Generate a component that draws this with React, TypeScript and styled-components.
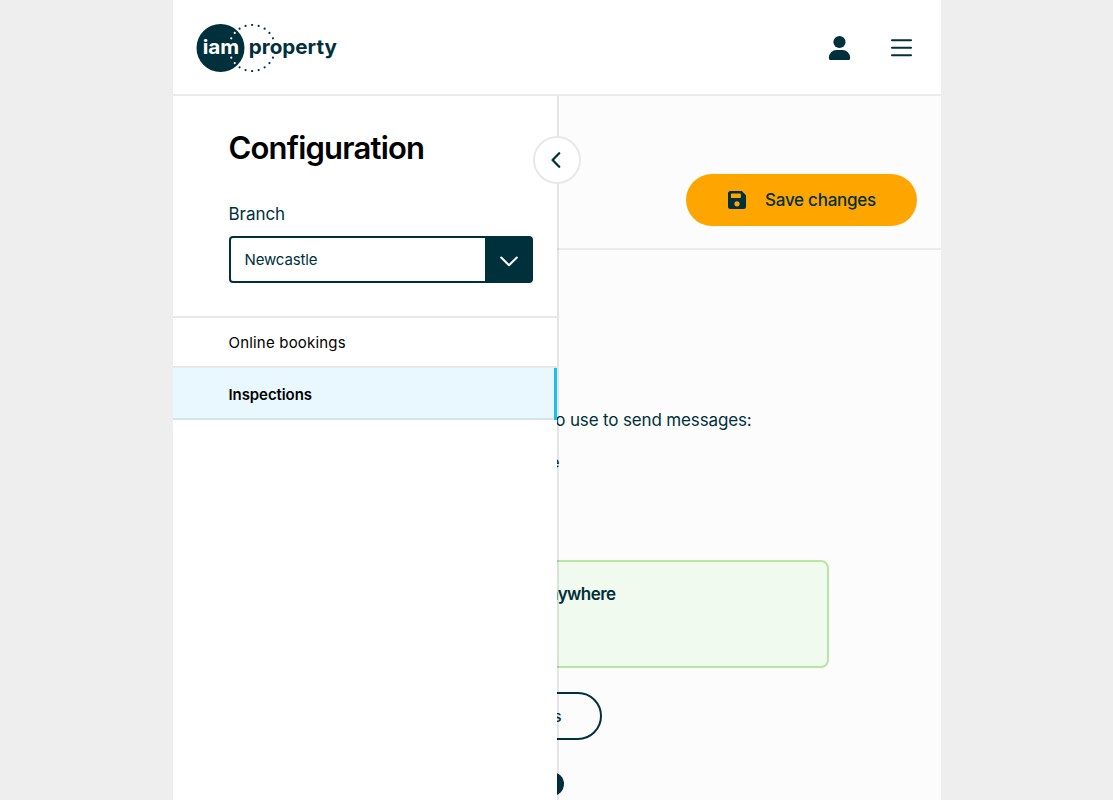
import React from "react";
import styled, { createGlobalStyle } from "styled-components";

const navy = "#00303c";
const line = "#ebebeb";

const GlobalStyle = createGlobalStyle`
  * { box-sizing: border-box; }
  html, body { margin: 0; height: 100%; background: #eeeeee; overflow: hidden; }
  body { font-family: Inter, "Liberation Sans", sans-serif; color: ${navy}; }
  button { font-family: inherit; color: inherit; padding: 0; }
`;

const Page = styled.div`
  width: 768px;
  height: 800px;
  margin: 0 auto;
  background: #fcfcfc;
  display: flex;
  flex-direction: column;
  overflow: hidden;
`;

const Header = styled.header`
  height: 96px;
  flex: none;
  background: #fff;
  border-bottom: 2px solid ${line};
  padding: 2px 28.5px 0 23.5px;
  display: flex;
  align-items: center;
  justify-content: space-between;
`;

const HeaderActions = styled.nav`
  display: flex;
  align-items: center;
  gap: 40px;
`;

const IconButton = styled.button`
  border: 0;
  background: none;
  display: flex;
  svg { overflow: visible; }
`;

const Body = styled.div`
  position: relative;
  flex: 1;
  min-height: 0;
`;

const Sidebar = styled.aside`
  position: absolute;
  top: 0;
  bottom: 0;
  left: 0;
  width: 386px;
  background: #fff;
  background-clip: padding-box;
  border-right: 2px solid rgba(0, 0, 0, 0.09);
`;

const Collapse = styled.button`
  position: absolute;
  top: 40px;
  right: -24px;
  width: 48px;
  height: 48px;
  border: 2px solid #e8e8e8;
  border-radius: 50%;
  background: #fff;
  display: flex;
  align-items: center;
  justify-content: center;
  padding-right: 2px;
`;

const SidebarTop = styled.div`
  height: 222px;
  padding: 32px 24px 0 56px;
  border-bottom: 2px solid #e8e8e8;
`;

const Title = styled.h1`
  margin: 0;
  color: #000;
  font-size: 31px;
  font-weight: 600;
  line-height: 40px;
  letter-spacing: -0.8px;
`;

const Label = styled.label`
  display: block;
  margin-top: 34px;
  font-size: 17px;
  line-height: 24px;
  letter-spacing: -0.05px;
`;

const Select = styled.div`
  margin-top: 10px;
  height: 47px;
  border: 2px solid ${navy};
  border-radius: 4px;
  background: linear-gradient(to left, ${navy} 46px, #fff 46px);
  display: flex;
`;

const SelectValue = styled.span`
  flex: 1;
  padding-left: 14px;
  font-size: 15px;
  line-height: 43px;
  letter-spacing: -0.15px;
`;

const SelectArrow = styled.span`
  width: 46px;
  padding: 3px 0 0 3px;
  display: flex;
  align-items: center;
  justify-content: center;
`;

const NavItem = styled.a<{ $active?: boolean }>`
  display: block;
  height: ${(p) => (p.$active ? 52 : 50)}px;
  padding-left: 56px;
  color: #000;
  font-size: 15px;
  line-height: ${(p) => (p.$active ? 53 : 49)}px;
  font-weight: ${(p) => (p.$active ? 600 : 400)};
  letter-spacing: ${(p) => (p.$active ? -0.08 : 0.19)}px;
  background: ${(p) => (p.$active ? "#e8f8fe" : "#fff")};
  box-shadow: inset 0 -2px ${(p) => (p.$active ? "#d5e4e9" : "#e8e8e8")};
`;

const ActiveItem = styled.div`
  display: flex;
  ${NavItem} { flex: 1; }
`;

const ActiveBar = styled.span`
  width: 3px;
  background: #1bc0e6;
`;

const Toolbar = styled.div`
  height: 154px;
  padding: 78px 24px 0 0;
  border-bottom: 2px solid ${line};
  display: flex;
  justify-content: flex-end;
`;

const SaveButton = styled.button`
  width: 231px;
  height: 52px;
  border: 0;
  border-radius: 26px;
  background: #ffa500;
  display: flex;
  align-items: center;
  justify-content: center;
  gap: 19px;
  padding-left: 2px;
  font-size: 17px;
  font-weight: 500;
  letter-spacing: -0.25px;
`;

const Content = styled.main`
  padding: 158px 112px 0 24px;
`;

const Paragraph = styled.p<{ $width: number; $size?: number }>`
  margin: 0 0 18px;
  width: ${(p) => p.$width}px;
  text-align: right;
  font-size: ${(p) => p.$size ?? 17}px;
  line-height: 24px;
  letter-spacing: -0.15px;
  white-space: nowrap;
`;

const Notice = styled.section`
  margin-top: 86px;
  height: 108px;
  border: 2px solid #b5e6a2;
  border-radius: 8px;
  background: #f0faee;
  padding: 20px 0 0;
`;

const NoticeTitle = styled.h2`
  margin: 0;
  width: 417px;
  text-align: right;
  font-size: 17px;
  font-weight: 600;
  line-height: 24px;
  letter-spacing: -0.55px;
`;

const OutlineButton = styled.button`
  display: block;
  width: 405px;
  height: 48px;
  margin-top: 24px;
  padding-right: 38px;
  border: 2px solid ${navy};
  border-radius: 24px;
  background: transparent;
  font-size: 15px;
  font-weight: 500;
  text-align: right;
`;

const ToggleRow = styled.div`
  width: 367.5px;
  margin-top: 32px;
  display: flex;
  justify-content: flex-end;
`;

const ToggleKnob = styled.span`
  width: 24px;
  height: 24px;
  border-radius: 50%;
  background: ${navy};
`;

const dotAngles = [-115, -131, -147, -163.5, 180, 163.5, 147, 131, 115, 65, 49, 33, 16.5, 0, -16.5, -33, -49, -65];

function Logo() {
  return (
    <svg width="142" height="48" viewBox="-0.5 0 142 48" role="img" aria-label="iam property">
      <circle cx="24" cy="24" r="24" fill={navy} />
      {dotAngles.map((a) => {
        const r = (a * Math.PI) / 180;
        const x = 55.6 + 23 * Math.sin(r);
        const y = 24 + 23 * Math.cos(r);
        const inside = Math.hypot(x - 24, y - 24) < 24;
        return <circle key={a} cx={x} cy={y} r="1.1" fill={inside ? "#fff" : navy} />;
      })}
      <g fontFamily="Inter, sans-serif" fontWeight="700" fontSize="20">
        <text x="6.2" y="29.5" fill="#fff" textLength="36.5" lengthAdjust="spacingAndGlyphs">iam</text>
        <text x="52.3" y="29.5" fill={navy} textLength="88" lengthAdjust="spacingAndGlyphs">property</text>
      </g>
    </svg>
  );
}

export default function App() {
  return (
    <>
      <GlobalStyle />
      <Page>
        <Header>
          <Logo />
          <HeaderActions>
            <IconButton aria-label="Account">
              <svg width="22" height="24" viewBox="-0.5 0 22 24" fill={navy}>
                <circle cx="11" cy="6" r="6.1" />
                <path d="M8 14h6a7.6 7.6 0 0 1 7.6 7.6v.9c0 .9-.6 1.5-1.5 1.5H2C1 24 .4 23.4.4 22.5v-.9A7.6 7.6 0 0 1 8 14z" />
              </svg>
            </IconButton>
            <IconButton aria-label="Menu">
              <svg width="22" height="18" viewBox="-0.5 0 22 18" stroke={navy} strokeWidth="2.1" strokeLinecap="round">
                <path d="M1.5 1.2h19M1.5 8.7h19M1.5 16.2h19" />
              </svg>
            </IconButton>
          </HeaderActions>
        </Header>
        <Body>
          <Toolbar>
            <SaveButton>
              <svg width="18" height="18" viewBox="0 0 18 18">
                <path
                  fill={navy}
                  fillRule="evenodd"
                  d="M2.5 0h11.3L18 4.2v11.3a2.5 2.5 0 0 1-2.5 2.5h-13A2.5 2.5 0 0 1 0 15.5v-13A2.5 2.5 0 0 1 2.5 0zM3.8 2.5a.9.9 0 0 0-.9.9v2.8c0 .5.4.9.9.9h8.2c.5 0 .9-.4.9-.9V3.4a.9.9 0 0 0-.9-.9zM9 10.2a2.6 2.6 0 1 0 0 5.2 2.6 2.6 0 0 0 0-5.2z"
                />
              </svg>
              Save changes
            </SaveButton>
          </Toolbar>
          <Content>
            <Paragraph $width={555}>to use to send messages:</Paragraph>
            <Paragraph $width={363} $size={16}>e</Paragraph>
            <Notice>
              <NoticeTitle>anywhere</NoticeTitle>
            </Notice>
            <OutlineButton>s</OutlineButton>
            <ToggleRow>
              <ToggleKnob />
            </ToggleRow>
          </Content>
          <Sidebar>
            <SidebarTop>
              <Title>Configuration</Title>
              <Label>Branch</Label>
              <Select>
                <SelectValue>Newcastle</SelectValue>
                <SelectArrow>
                  <svg width="18" height="11" viewBox="0 0 18 11" fill="none" stroke="#fff" strokeWidth="2" strokeLinecap="round" strokeLinejoin="round">
                    <path d="M1.2 1.5 9 9.3l7.8-7.8" />
                  </svg>
                </SelectArrow>
              </Select>
            </SidebarTop>
            <NavItem>Online bookings</NavItem>
            <ActiveItem>
              <NavItem $active>Inspections</NavItem>
              <ActiveBar />
            </ActiveItem>
            <Collapse aria-label="Collapse">
              <svg width="10" height="16" viewBox="0 0 10 16" fill="none" stroke={navy} strokeWidth="2.3" strokeLinecap="round" strokeLinejoin="round">
                <path d="M8.2 1.3 1.6 8l6.6 6.7" />
              </svg>
            </Collapse>
          </Sidebar>
        </Body>
      </Page>
    </>
  );
}
